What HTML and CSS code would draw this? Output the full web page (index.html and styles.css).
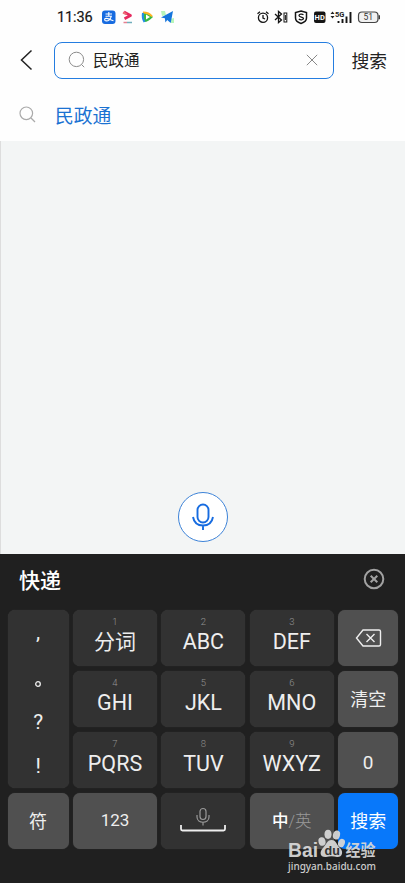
FILE: index.html
```
<!DOCTYPE html>
<html lang="zh-CN">
<head>
<meta charset="utf-8">
<meta name="viewport" content="width=device-width, initial-scale=1">
<title>搜索</title>
<link rel="stylesheet" href="styles.css">
</head>
<body>
<main class="screen">
  <header class="status">
    <time class="clock">11:36</time>
    <svg class="apps" width="76" height="16" viewBox="0 0 76 16">
      <rect x="1" y="1.5" width="13.5" height="13.5" rx="3" fill="#176be0"/>
      <path d="M4.500 5h6.500M7.800 3v4.300M4.500 7.300h5.800c-.7 2.200-2.700 4.600-5 4.600-2.200 0-2.200-2.300-.3-2.500 2.200-.2 4 1.300 7.500 2.300" fill="none" stroke="#fff" stroke-width="1.100"/>
      <path d="M23 3l6.500 3.500-6 3.300" fill="none" stroke="#e62b60" stroke-width="2.700" stroke-linejoin="round"/>
      <path d="M22 3.500l3.500 1.800" stroke="#ed6e78" stroke-width="2"/>
      <path d="M22.500 13.500h3.500" stroke="#e78091" stroke-width="1.500"/><path d="M26 13.500h5" stroke="#70aebc" stroke-width="1.500"/>
      <path d="M42 3.500q5-.5 10 4.500-5 5-8.500 5-2.500-4-1.500-9.500z" fill="#36b846"/>
      <path d="M42 3.500q6 0 9 4" fill="none" stroke="#ffb323" stroke-width="2"/>
      <path d="M42 4q-1 5 1.500 9" fill="none" stroke="#238ce8" stroke-width="2"/>
      <path d="M45 5.500l4 2.500-4 2.500z" fill="#fff"/>
      <path d="M60 2h4l1 4-4 1zM69 10l4-1v5h-3z" fill="#b7f5ba"/>
      <path d="M60 8.500L72 2l-2.300 12-3.500-3-1.800 2.500-.5-4.300z" fill="#1676dc"/>
    </svg>
    <svg class="signals" width="126" height="16" viewBox="0 0 126 16">
      <g fill="none" stroke="#151515" stroke-width="1.300">
        <circle cx="7" cy="8.700" r="4.600"/><path d="M7 6v3l2 1M1.500 4.800l2.500-2M12.500 4.800l-2.500-2"/>
        <path d="M19 5l6.500 6-3 2.500V2.500l3 2.500-6.500 6"/><rect x="28" y="4" width="2.800" height="9" stroke-width="1"/><path d="M29.400 6v5" stroke-width="1"/>
        <path d="M45 2l5.500 1.500v5.500c0 2.500-2.500 4.500-5.500 5.500-3-1-5.500-3-5.500-5.500V3.500z" stroke-width="1.500"/>
        <path d="M47.500 5.700c-1.500-.8-4.500-.8-4.500.9 0 2 4.500 1 4.500 3 0 1.600-3.500 1.500-4.700.5"/>
      </g>
      <rect x="58" y="2.500" width="11.500" height="11.500" rx="2" fill="#151515"/>
      <text x="63.700" y="11" class="hd">HD</text>
      <path d="M74.500 5L76.500 2.500l2 2.500zM74.500 7L76.500 9.500l2-2.500z" fill="#222"/>
      <text x="79" y="7.500" class="five-g">5G</text>
      <path d="M82.500 14v-2M86.500 14v-4M90.500 14V7.500M94.500 14V3" stroke="#151515" stroke-width="1.900" fill="none"/>
      <rect x="102.500" y="3" width="19.500" height="10.500" rx="3.500" fill="#f1f1f1" stroke="#444" stroke-width="1.200"/>
      <path d="M123.300 6.300v4" stroke="#333" stroke-width="1.300"/>
      <text x="112.200" y="11" class="battery">51</text>
    </svg>
  </header>

  <section class="search-row">
    <svg class="back" width="13" height="22" viewBox="0 0 13 22"><path d="M11.500 1.500L1.500 11l10 9.500" fill="none" stroke="#222" stroke-width="1.500"/></svg>
    <div class="field">
      <svg width="18" height="18" viewBox="0 0 18 18" fill="none" stroke="#8b8b8b" stroke-width="1"><circle cx="8.400" cy="8.400" r="7.200"/><path d="M13.500 13.500l2.700 2.700"/></svg>
      <span class="query">民政通</span>
      <svg class="clear" width="12" height="12" viewBox="0 0 12 12"><path d="M.8.800l10.400 10.400M11.200.800L.8 11.200" stroke="#888" stroke-width="1"/></svg>
    </div>
    <span class="submit">搜索</span>
  </section>
  <section class="suggestion">
    <svg width="17" height="17" viewBox="0 0 17 17" fill="none" stroke="#aaa" stroke-width="1.200"><circle cx="7.300" cy="7.300" r="6.300"/><path d="M12 12l4 4"/></svg>
    <span>民政通</span>
  </section>
  <section class="results">
    <div class="voice"><svg width="24" height="28" viewBox="0 0 24 28" fill="none" stroke="#176ce0" stroke-width="1.900"><rect x="6.500" y="1.500" width="11" height="18" rx="5.500"/><path d="M2 14c1 5.500 4.800 8.500 10 8.500S21 19.500 22 14M12 22.500V27"/></svg></div>
  </section>

  <section class="keyboard">
    <div class="candidates"><span>快递</span><svg width="22" height="22" viewBox="0 0 22 22" fill="none" stroke="#a2a2a2" stroke-width="2"><circle cx="11" cy="11" r="9.300"/><path d="M7.700 7.700l6.600 6.600M14.300 7.700l-6.600 6.600"/></svg></div>
    <div class="keys">
      <div class="key punctuation"><span class="comma">,</span><svg class="stop" width="8" height="8" viewBox="0 0 8 8"><circle cx="4" cy="4" r="2.300" fill="none" stroke="#eee" stroke-width="1.300"/></svg><span>?</span><span>!</span></div>
      <div class="key letter"><small>1</small><span class="han">分词</span></div>
      <div class="key letter"><small>2</small><span>ABC</span></div>
      <div class="key letter"><small>3</small><span>DEF</span></div>
      <div class="key light"><svg class="delete" width="27" height="18" viewBox="0 0 27 18" fill="none" stroke="#eee" stroke-width="1.400"><path d="M8 1h16q1.500 0 1.500 1.500v13Q25.500 17 24 17H8L1.500 9z"/><path d="M11.500 5l8 8M19.500 5l-8 8"/></svg></div>
      <div class="key letter"><small>4</small><span>GHI</span></div>
      <div class="key letter"><small>5</small><span>JKL</span></div>
      <div class="key letter"><small>6</small><span>MNO</span></div>
      <div class="key light command">清空</div>
      <div class="key letter"><small>7</small><span>PQRS</span></div>
      <div class="key letter"><small>8</small><span>TUV</span></div>
      <div class="key letter"><small>9</small><span>WXYZ</span></div>
      <div class="key light zero">0</div>
      <div class="key light command">符</div>
      <div class="key light number">123</div>
      <div class="key space"><svg width="48" height="28" viewBox="0 0 48 28" fill="none"><g stroke="#999" stroke-width="1.200"><rect x="21" y="2.500" width="6" height="11" rx="3"/><path d="M18 9v2c0 7 12 7 12 0V9M24 16.500v3"/></g><path d="M2 19v4q0 1.500 1.500 1.500h41q1.500 0 1.500-1.500v-4" stroke="#eee" stroke-width="1.800"/></svg></div>
      <div class="key light language"><b>中</b><span>/英</span></div>
      <div class="key primary command">搜索</div>
    </div>
    <div class="watermark">
      <svg width="94" height="50" viewBox="0 0 94 50">
        <g fill="#d6d6d6"><ellipse cx="35" cy="13.500" rx="3.500" ry="4.300" transform="rotate(-15 35 13.500)"/><ellipse cx="41" cy="6.300" rx="3.500" ry="4.600"/><ellipse cx="49.500" cy="7" rx="3.500" ry="4.600" transform="rotate(15 49.500 7)"/><ellipse cx="54.500" cy="15" rx="3.300" ry="4.300" transform="rotate(20 54.500 15)"/><path d="M44.500 12c5 0 5 5 8.500 8 4 4 2 9.500-3 9-4-1-7-1-11 0-6 .5-7-5-3-9 3-3 4-8 8.500-8z"/></g>
        <text x="1" y="29" class="brand" textLength="30" lengthAdjust="spacingAndGlyphs">Bai</text>
        <text x="37.500" y="26.500" class="du">du</text>
        <text x="58.500" y="28" class="brand-han" textLength="30" lengthAdjust="spacingAndGlyphs">经验</text>
        <text x="1" y="41.500" class="site" textLength="88" lengthAdjust="spacingAndGlyphs">jingyan.baidu.com</text>
      </svg>
    </div>
  </section>
</main>
</body>
</html>
```
FILE: styles.css
```
* { box-sizing: border-box; }
body { margin: 0; font-family: Roboto, "Noto Sans CJK SC", sans-serif; }
svg { display: block; flex: none; }
.screen { width: 405px; height: 883px; display: flex; flex-direction: column; background: #fefefe; overflow: hidden; }
.status { height: 34px; display: flex; align-items: center; padding: 0 23px 0 57px; color: #151515; }
.clock { width: 44px; padding-top: 2px; font-size: 14.5px; line-height: 20px; font-weight: 400; -webkit-text-stroke: .2px #151515; letter-spacing: -.1px; }
.signals { margin-left: auto; }
.hd { font: 700 7.5px Roboto, sans-serif; fill: #fff; text-anchor: middle; }
.five-g { font: 700 7.5px Roboto, sans-serif; fill: #222; }
.battery { font: 8.5px Roboto, sans-serif; fill: #333; text-anchor: middle; }
.search-row { height: 53px; display: flex; align-items: center; padding: 0 18px 1px 20px; color: #222; }
.field { width: 280px; height: 37px; margin-left: 21px; padding: 0 15px 0 13px; border: 1.3px solid #247de0; border-radius: 8px; display: flex; align-items: center; }
.query { margin-left: 7px; padding-top: 2px; font-size: 15.5px; line-height: 22px; }
.clear { margin-left: auto; }
.submit { margin-left: auto; padding-top: 3px; font-size: 17.8px; line-height: 26px; }
.suggestion { height: 54px; display: flex; align-items: center; gap: 19px; padding: 0 19px; font-size: 18.8px; color: #1b72d2; }
.results { height: 413px; display: flex; justify-content: center; align-items: flex-end; padding: 0 1px 12px 0; background: #f3f5f5; border-left: 1px solid #ddd; }
.voice { width: 50px; height: 50px; border: 1.2px solid #3d83d8; border-radius: 50%; background: #fff; display: grid; place-items: center; }
.keyboard { position: relative; flex: 1; background: #202020; color: #eee; }
.candidates { height: 56px; padding: 0 20px 7px 19px; display: flex; justify-content: space-between; align-items: center; font-size: 21px; font-weight: 500; color: #fff; }
.keys { display: grid; grid-template-columns: 61px repeat(3, 84px) 60px; grid-template-rows: repeat(4, 56px); gap: 5px 4.4px; padding-left: 7.6px; }
.key { border-radius: 7px; background: #323232; box-shadow: 0 0 1px #444; display: flex; align-items: center; justify-content: center; font-size: 18px; }
.light { background: #505050; }
.primary { background: #0878fa; color: #fff; }
.command { padding-bottom: 3px; }
.letter { flex-direction: column; justify-content: flex-start; font-size: 21.5px; line-height: 26px; }
.letter small { font-size: 9.5px; font-weight: 300; line-height: 12px; margin: 6px 0 1px; color: #929292; }
.han { font-size: 21px; }
.zero { padding-top: 4px; font-size: 19px; }
.number { padding-bottom: 2px; font-size: 17px; }
.space { padding-bottom: 3px; }
.punctuation { grid-row: span 3; flex-direction: column; justify-content: flex-start; font-size: 21px; }
.punctuation span { height: 44px; line-height: 44px; }
.punctuation .comma { height: 50px; }
.stop { margin: 20px 0 12px; }
.language { padding-bottom: 2px; }
.language b { font-weight: 500; font-size: 16.5px; color: #fff; }
.language span { font-size: 16.5px; font-weight: 300; color: #999; }
.watermark { position: absolute; left: 287px; top: 274px; opacity: .95; }
.brand { font: 700 20px "Liberation Sans", sans-serif; fill: #d6d6d6; }
.du { font: 700 12.5px "Liberation Sans", sans-serif; fill: #333; }
.brand-han { font: 700 15.5px "Noto Sans CJK SC", sans-serif; fill: #d6d6d6; }
.site { font: 500 10.5px "Noto Sans", sans-serif; fill: #d6d6d6; }
```
